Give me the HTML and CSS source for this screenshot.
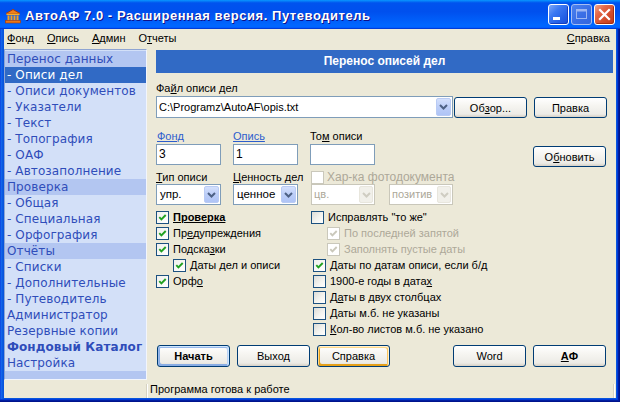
FILE: index.html
```html
<!DOCTYPE html>
<html lang="ru">
<head>
<meta charset="utf-8">
<title>АвтоАФ 7.0</title>
<link rel="stylesheet" href="styles.css">
</head>
<body>
<div class="window">
  <div class="titlebar">
    <svg class="app-icon" viewBox="0 0 16 16" width="16" height="16">
      <polygon points="8,1.5 15,5.5 1,5.5" fill="#F08020" stroke="#B03800" stroke-width="1"/>
      <rect x="1.5" y="5.5" width="13" height="1.6" fill="#F8B030"/>
      <rect x="2.5" y="7.5" width="2" height="5" fill="#F8A020"/>
      <rect x="5.5" y="7.5" width="2" height="5" fill="#F8A020"/>
      <rect x="8.5" y="7.5" width="2" height="5" fill="#F8A020"/>
      <rect x="11.5" y="7.5" width="2" height="5" fill="#F8A020"/>
      <rect x="0.5" y="12.5" width="15" height="2.5" fill="#E87818" stroke="#B03800" stroke-width="0.6"/>
    </svg>
    <span class="title">АвтоАФ 7.0 - Расширенная версия. Путеводитель</span>
    <div class="tb-buttons">
      <span class="tb tb-min"><svg viewBox="0 0 19 19" width="19" height="19"><rect x="4" y="12" width="7" height="3" fill="#fff"/></svg></span>
      <span class="tb tb-max"><svg viewBox="0 0 19 19" width="19" height="19"><rect x="4.5" y="4.5" width="10" height="9" fill="none" stroke="#9DB6F2" stroke-width="1"/><rect x="4.5" y="4.5" width="10" height="2" fill="#9DB6F2"/></svg></span>
      <span class="tb tb-close"><svg viewBox="0 0 19 19" width="19" height="19"><path d="M5 5 L14 14 M14 5 L5 14" stroke="#fff" stroke-width="2.2" stroke-linecap="square"/></svg></span>
    </div>
  </div>
  <div class="client">
    <div class="menubar">
      <span class="menu-item"><u>Ф</u>онд</span>
      <span class="menu-item"><u>О</u>пись</span>
      <span class="menu-item"><u>А</u>дмин</span>
      <span class="menu-item">О<u>т</u>четы</span>
      <span class="menu-item menu-right"><u>С</u>правка</span>
    </div>
    <div class="main">
      <nav class="sidebar">
        <div class="nav band">Перенос данных</div>
        <div class="nav sel">- Описи дел</div>
        <div class="nav">- Описи документов</div>
        <div class="nav">- Указатели</div>
        <div class="nav">- Текст</div>
        <div class="nav">- Топография</div>
        <div class="nav">- ОАФ</div>
        <div class="nav">- Автозаполнение</div>
        <div class="nav band">Проверка</div>
        <div class="nav">- Общая</div>
        <div class="nav">- Специальная</div>
        <div class="nav">- Орфография</div>
        <div class="nav band">Отчёты</div>
        <div class="nav">- Списки</div>
        <div class="nav">- Дополнительные</div>
        <div class="nav">- Путеводитель</div>
        <div class="nav">Администратор</div>
        <div class="nav">Резервные копии</div>
        <div class="nav bold">Фондовый Каталог</div>
        <div class="nav">Настройка</div>
        <div class="strip"></div>
      </nav>
      <section class="content">
        <div class="header">Перенос описей дел</div>
        <div class="lbl-file">Фа<u>й</u>л описи дел</div>
        <div class="row-file">
          <div class="combo combo-file">
            <span class="val">C:\Programz\AutoAF\opis.txt</span>
            <span class="arrow"><svg viewBox="0 0 9 6" width="9" height="6"><polyline points="1,1 4.5,4.5 8,1" fill="none" stroke="#4D6185" stroke-width="2"/></svg></span>
          </div>
          <span class="btn btn-first">Об<u>з</u>ор...</span>
          <span class="btn btn-next">Правка</span>
        </div>

        <div class="lbl-row">
          <span class="lbl lbl-col link"><u>Фонд</u></span>
          <span class="lbl lbl-col link"><u>Опись</u></span>
          <span class="lbl">То<u>м</u> описи</span>
        </div>
        <div class="field-row">
          <span class="field">3</span>
          <span class="field gap12">1</span>
          <span class="field gap12"></span>
          <span class="btn btn-refresh">О<u>б</u>новить</span>
        </div>

        <div class="lbl-row lbl-row2">
          <span class="lbl lbl-col"><u>Т</u>ип описи</span>
          <span class="lbl lbl-col"><u>Ц</u>енность дел</span>
          <span class="cbrow disabled inline">
            <span class="cb"></span>
            <span class="photo-lbl">Хар-ка фотодокумента</span>
          </span>
        </div>
        <div class="select-row">
          <div class="combo combo-sm">
            <span class="val">упр.</span>
            <span class="arrow"><svg viewBox="0 0 9 6" width="9" height="6"><polyline points="1,1 4.5,4.5 8,1" fill="none" stroke="#4D6185" stroke-width="2"/></svg></span>
          </div>
          <div class="combo combo-sm gap12">
            <span class="val">ценное</span>
            <span class="arrow"><svg viewBox="0 0 9 6" width="9" height="6"><polyline points="1,1 4.5,4.5 8,1" fill="none" stroke="#4D6185" stroke-width="2"/></svg></span>
          </div>
          <div class="combo combo-sm combo-dis gap13">
            <span class="val">цв.</span>
            <span class="arrow"><svg viewBox="0 0 9 6" width="9" height="6"><polyline points="1,1 4.5,4.5 8,1" fill="none" stroke="#CFCDC2" stroke-width="2"/></svg></span>
          </div>
          <div class="combo combo-sm combo-dis gap14">
            <span class="val">позитив</span>
            <span class="arrow"><svg viewBox="0 0 9 6" width="9" height="6"><polyline points="1,1 4.5,4.5 8,1" fill="none" stroke="#CFCDC2" stroke-width="2"/></svg></span>
          </div>
        </div>

        <div class="checks">
          <div class="col-left">
            <div class="cbrow"><span class="cb on"><svg viewBox="0 0 11 11" width="11" height="11"><path d="M2.3 5.2 L4.4 7.4 L8.7 3" fill="none" stroke="#21A121" stroke-width="1.9"/></svg></span><span class="strong"><u>Проверка</u></span></div>
            <div class="cbrow"><span class="cb on"><svg viewBox="0 0 11 11" width="11" height="11"><path d="M2.3 5.2 L4.4 7.4 L8.7 3" fill="none" stroke="#21A121" stroke-width="1.9"/></svg></span><span>Пр<u>е</u>дупреждения</span></div>
            <div class="cbrow"><span class="cb on"><svg viewBox="0 0 11 11" width="11" height="11"><path d="M2.3 5.2 L4.4 7.4 L8.7 3" fill="none" stroke="#21A121" stroke-width="1.9"/></svg></span><span>Подска<u>з</u>ки</span></div>
            <div class="cbrow ind17"><span class="cb on"><svg viewBox="0 0 11 11" width="11" height="11"><path d="M2.3 5.2 L4.4 7.4 L8.7 3" fill="none" stroke="#21A121" stroke-width="1.9"/></svg></span><span>Даты дел и описи</span></div>
            <div class="cbrow"><span class="cb on"><svg viewBox="0 0 11 11" width="11" height="11"><path d="M2.3 5.2 L4.4 7.4 L8.7 3" fill="none" stroke="#21A121" stroke-width="1.9"/></svg></span><span>Орф<u>о</u></span></div>
          </div>
          <div class="col-right">
            <div class="cbrow"><span class="cb"></span><span>Исправлять "то же"</span></div>
            <div class="cbrow ind16 disabled"><span class="cb on"><svg viewBox="0 0 11 11" width="11" height="11"><path d="M2.3 5.2 L4.4 7.4 L8.7 3" fill="none" stroke="#CAC8BB" stroke-width="1.9"/></svg></span><span>По последней запятой</span></div>
            <div class="cbrow ind16 disabled"><span class="cb on"><svg viewBox="0 0 11 11" width="11" height="11"><path d="M2.3 5.2 L4.4 7.4 L8.7 3" fill="none" stroke="#CAC8BB" stroke-width="1.9"/></svg></span><span>Заполнять пустые даты</span></div>
            <div class="cbrow ind2"><span class="cb on"><svg viewBox="0 0 11 11" width="11" height="11"><path d="M2.3 5.2 L4.4 7.4 L8.7 3" fill="none" stroke="#21A121" stroke-width="1.9"/></svg></span><span>Даты по датам описи, если б/д</span></div>
            <div class="cbrow ind2"><span class="cb"></span><span>1900-е годы в дата<u>х</u></span></div>
            <div class="cbrow ind2"><span class="cb"></span><span>Д<u>а</u>ты в двух столбцах</span></div>
            <div class="cbrow ind2"><span class="cb"></span><span><u>Д</u>аты м.б. не указаны</span></div>
            <div class="cbrow ind2"><span class="cb"></span><span><u>К</u>ол-во листов м.б. не указано</span></div>
          </div>
        </div>

        <div class="btn-row">
          <span class="btn btn-first btn-default strong">Начать</span>
          <span class="btn btn-next">Выход</span>
          <span class="btn btn-next btn-hover">Справка</span>
          <span class="btn btn-word">Word</span>
          <span class="btn btn-next strong"><u>А</u>Ф</span>
        </div>
      </section>
    </div>
    <div class="statusbar">
      <span class="sb-panel"></span>
      <span class="sb-sep"></span>
      <span class="sb-text">Программа готова к работе</span>
      <span class="sb-sep sb-sep-right"></span>
    </div>
  </div>
</div>
</body>
</html>
```

FILE: styles.css
```css
* { box-sizing: border-box; }

html, body {
  margin: 0;
  padding: 0;
  width: 620px;
  height: 402px;
  overflow: hidden;
  background: #0A46DC;
}

body {
  font-family: "Liberation Sans", Arial, sans-serif;
  font-size: 11px;
  color: #000;
}

.window {
  width: 620px;
  height: 402px;
  display: flex;
  flex-direction: column;
  background: linear-gradient(90deg, #0831D9 0, #166AEE 1px, #0855DD 3px, #0855DD 100%);
  box-shadow: inset -1px -1px #00138C, inset -2px -2px #001EA0, inset -3px -3px #003BDA;
}

/* ---------- title bar ---------- */
.titlebar {
  height: 29px;
  flex: none;
  display: flex;
  align-items: center;
  padding: 2px 5px 0 5px;
  background: linear-gradient(180deg, #0997FF 0%, #0053EE 10%, #0050EE 40%, #0066FF 86%, #0066FF 92%, #005BFF 95%, #003DD7 97%, #003DD7 100%);
}

.app-icon {
  flex: none;
  margin-right: 4px;
}

.title {
  flex: 1;
  color: #fff;
  font-family: "Liberation Sans", Arial, sans-serif;
  font-weight: bold;
  font-size: 13px;
  letter-spacing: 0.55px;
  text-shadow: 1px 1px #0F1089;
  white-space: nowrap;
}

.tb-buttons {
  display: flex;
  gap: 2px;
  margin-top: -2px;
}

.tb {
  width: 21px;
  height: 21px;
  border: 1px solid #fff;
  border-radius: 3px;
  display: flex;
  align-items: center;
  justify-content: center;
}

.tb-min {
  background: linear-gradient(135deg, #7EA8F8 0%, #3B78F2 35%, #2460E6 70%, #1B4FD8 100%);
  box-shadow: inset -1px -1px #1440C0;
}

.tb-max {
  border-color: #A6BEF2;
  background: linear-gradient(135deg, #4C82EE 0%, #3B6FE6 50%, #3466DE 100%);
}

.tb-close {
  background: linear-gradient(135deg, #F1A68C 0%, #E4694A 30%, #D24C2A 65%, #C23A18 100%);
  box-shadow: inset -1px -1px #A82E10;
}

/* ---------- client ---------- */
.client {
  flex: 1;
  margin: 0 4px 4px 4px;
  background: #ECE9D8;
  display: flex;
  flex-direction: column;
  min-height: 0;
}

.menubar {
  height: 18px;
  flex: none;
  display: flex;
  gap: 13px;
  padding: 0 6px 0 3px;
  line-height: 18px;
  font-size: 11px;
}

.menu-right { margin-left: auto; }

.main {
  flex: 1;
  display: flex;
  min-height: 0;
}

/* ---------- sidebar ---------- */
.sidebar {
  flex: none;
  width: 143px;
  height: 331px;
  margin-top: 2px;
  padding-top: 1px;
  background: #D3E0F8;
  border: 1px solid #F2F5FC;
  border-left-color: #8EA4D2;
  border-top-color: #8EA4D2;
  font-family: "DejaVu Sans", Verdana, sans-serif;
  font-size: 12px;
  letter-spacing: 0.1px;
  color: #2F4DBA;
  overflow: hidden;
}

.nav {
  height: 16px;
  line-height: 16px;
  padding-left: 2px;
  white-space: nowrap;
  overflow: hidden;
}

.band { background: #B3C6F1; }
.sel { background: #316AC5; color: #fff; }
.bold { font-weight: bold; }

.strip {
  height: 8px;
  background: #B3C6F1;
}

/* ---------- content ---------- */
.content {
  flex: none;
  width: 457px;
  margin-left: 9px;
  margin-top: 3px;
  display: flex;
  flex-direction: column;
}

.header {
  height: 23px;
  line-height: 23px;
  background: #316AC5;
  color: #fff;
  font-weight: bold;
  font-size: 12px;
  text-align: center;
}

.lbl-file {
  margin-top: 8px;
  height: 14px;
  line-height: 14px;
}

.row-file {
  margin-top: 1px;
  display: flex;
  align-items: flex-start;
  height: 22px;
}

.combo {
  display: flex;
  align-items: stretch;
  border: 1px solid #7F9DB9;
  background: #fff;
  padding: 1px;
}

.combo .val {
  flex: 1;
  padding-left: 1px;
  line-height: 18px;
  white-space: nowrap;
  overflow: hidden;
}

.combo .arrow {
  width: 15px;
  flex: none;
  border: 1px solid #B9CBF4;
  border-radius: 2px;
  background: linear-gradient(180deg, #D4E0FC 0%, #BCCEF8 50%, #AFC4F6 100%);
  display: flex;
  align-items: center;
  justify-content: center;
}

.combo-file {
  width: 297px;
  height: 22px;
}

.combo-sm {
  width: 65px;
  height: 21px;
}

.combo-sm .val { padding-left: 2px; line-height: 17px; font-size: 11.5px; }

.combo-dis {
  width: 64px;
  border-color: #C9C7BA;
  background: #fff;
}

.combo-dis .val { color: #ACA899; font-size: 11px; padding-left: 1px; }

.combo-dis .arrow {
  width: 14px;
  border-color: #E8E6DD;
  background: #F1F0EA;
}

.btn {
  width: 73px;
  height: 21px;
  border: 1px solid #003C74;
  border-radius: 3px;
  background: linear-gradient(180deg, #FFFFFF 0%, #F6F5F1 40%, #ECEBE6 85%, #D6D0C5 100%);
  display: flex;
  align-items: center;
  justify-content: center;
  font-size: 11px;
  white-space: nowrap;
  flex: none;
}

.btn-first { margin-left: 1px; margin-top: 1px; }
.btn-next { margin-left: 7px; margin-top: 1px; }

.btn-default {
  box-shadow: inset -1px 1px #CEE7FF, inset 1px 2px #98B8EA, inset -2px 2px #BCD4F6, inset 1px -1px #89ADE4, inset 2px -2px #89ADE4;
}

.btn-hover {
  box-shadow: inset -1px 1px #FFF0CF, inset 1px 2px #FDD889, inset -2px 2px #FBC761, inset 2px -2px #E5A01A;
}

.strong { font-weight: bold; }

.lbl-row {
  margin-top: 11px;
  height: 14px;
  line-height: 14px;
  display: flex;
  align-items: center;
}

.lbl-row2 { margin-top: 3px; }

.lbl { white-space: nowrap; }
.lbl-col { width: 77px; flex: none; }
.lbl-row .lbl:first-child { padding-left: 1px; }
.lbl-row2 .lbl:first-child { padding-left: 0; }
.link { color: #2C5DCD; }

.photo-lbl { font-size: 12px; }

.field-row {
  margin-top: 1px;
  height: 23px;
  display: flex;
  align-items: flex-start;
}

.field {
  width: 65px;
  height: 21px;
  border: 1px solid #7F9DB9;
  background: #fff;
  padding-left: 2px;
  line-height: 19px;
  font-size: 12px;
  flex: none;
}

.gap12 { margin-left: 12px; }
.gap13 { margin-left: 13px; }
.gap14 { margin-left: 14px; }

.btn-refresh { margin-left: 158px; margin-top: 2px; }

.select-row {
  display: flex;
  margin-top: 0;
  height: 21px;
}

/* ---------- checkboxes ---------- */
.checks {
  margin-top: 4px;
  display: flex;
  height: 128px;
}

.col-left { width: 155px; flex: none; }
.col-right { flex: 1; }

.cbrow {
  height: 16px;
  display: flex;
  align-items: center;
  gap: 4px;
  white-space: nowrap;
}

.cbrow.inline { height: 14px; margin-left: 1px; gap: 3px; }

.cb {
  width: 13px;
  height: 13px;
  flex: none;
  border: 1px solid #1C5180;
  background: linear-gradient(135deg, #DCDCD7 0%, #F3F3EF 55%, #FFFFFF 100%);
  display: flex;
  align-items: center;
  justify-content: center;
}

.cb.on { background: linear-gradient(135deg, #F0F0EC 0%, #FFFFFF 100%); }

.disabled { color: #ACA899; }
.disabled .cb { border-color: #CAC8BB; background: #fff; }

.ind17 { margin-left: 17px; }
.ind16 { margin-left: 16px; }
.ind2 { margin-left: 2px; }

/* ---------- buttons row ---------- */
.btn-row {
  margin-top: 8px;
  display: flex;
  height: 22px;
}

.btn-row .btn { height: 22px; margin-top: 0; }
.btn-row .btn-word { margin-left: 63px; }

/* ---------- status bar ---------- */
.statusbar {
  height: 18px;
  flex: none;
  display: flex;
  align-items: stretch;
  line-height: 18px;
  font-size: 11px;
}

.sb-panel { width: 142px; flex: none; }

.sb-sep {
  width: 2px;
  flex: none;
  margin-top: 4px;
  border-left: 1px solid #D6D2C2;
  border-right: 1px solid #fff;
}

.sb-text {
  flex: 1;
  padding-left: 2px;
  white-space: nowrap;
}

.sb-sep-right { margin-right: 1px; }
```
